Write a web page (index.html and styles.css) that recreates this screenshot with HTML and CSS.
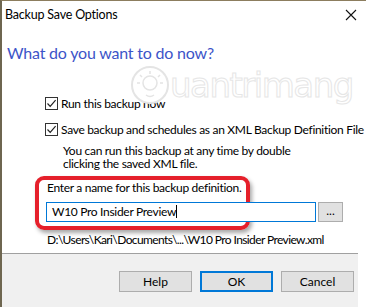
FILE: index.html
```html
<!DOCTYPE html>
<html lang="en">
<head>
    <meta charset="UTF-8">
    <meta name="viewport" content="width=device-width, initial-scale=1.0">
    <title>Backup Save Options</title>
    <link rel="stylesheet" href="styles.css">
</head>
<body>
<div class="window">
    <div class="titlebar">
        <span class="title">Backup Save Options</span>
        <svg class="close" width="12" height="12" viewBox="0 0 12 12">
            <path d="M1 1 L11 11 M11 1 L1 11" stroke="#111" stroke-width="1.1" fill="none"/>
        </svg>
    </div>

    <div class="content">
        <h1>What do you want to do now?</h1>

        <div class="check first">
            <span class="box">
                <svg width="11" height="11" viewBox="0 0 11 11"><path d="M1.5 5.5 L4.2 8.3 L9.6 2.2" stroke="#222" stroke-width="1.2" fill="none"/></svg>
            </span>
            <span>Run this backup now</span>
        </div>
        <div class="check">
            <span class="box">
                <svg width="11" height="11" viewBox="0 0 11 11"><path d="M1.5 5.5 L4.2 8.3 L9.6 2.2" stroke="#222" stroke-width="1.2" fill="none"/></svg>
            </span>
            <span>Save backup and schedules as an XML Backup Definition File</span>
        </div>
        <p class="note">You can run this backup at any time by double<br>clicking the saved XML file.</p>

        <div class="name-group">
            <div class="highlight"></div>
            <div class="prompt">Enter a name for this backup definition.</div>
            <div class="name-row">
                <div class="name-input">W10 Pro Insider Preview<span class="caret"></span></div>
                <button class="browse">...</button>
            </div>
        </div>
        <div class="path">D:\Users\Kari\Documents\...\W10 Pro Insider Preview.xml</div>

        <div class="watermark">
            <svg width="40" height="40" viewBox="0 0 40 40">
                <circle cx="20" cy="20" r="18" stroke="#e4e4e4" stroke-width="2" fill="none"/>
                <circle cx="20" cy="18" r="7" stroke="#e4e4e4" stroke-width="1.5" fill="none"/>
                <path d="M20 6 V9 M10 10 L12 12 M30 10 L28 12 M7 18 H10 M30 18 H33 M16 30 Q20 33 24 30" stroke="#e4e4e4" stroke-width="1.5" fill="none"/>
            </svg>
            <span>uantrimang</span>
        </div>
    </div>

    <div class="footer">
        <button class="btn">Help</button>
        <button class="btn default">OK</button>
        <button class="btn">Cancel</button>
    </div>
</div>
</body>
</html>
```

FILE: styles.css
```css
body {
    margin: 0;
    background-color: #ffffff;
    font-family: 'Lato', 'Noto Sans', sans-serif;
    font-size: 12px;
    color: #000;
}

.window {
    position: relative;
    width: 366px;
    height: 307px;
    box-sizing: border-box;
    border-top: 1px solid #8c7d5e;
    border-left: 2px solid #6e6650;
    background-color: #fff;
    overflow: hidden;
    white-space: nowrap;
    letter-spacing: -0.3px;
}

.titlebar {
    display: flex;
    justify-content: space-between;
    align-items: center;
    height: 26px;
    padding: 0 8px 0 3px;
}

.title {
    font-size: 12.5px;
    letter-spacing: -0.2px;
}

.close {
    margin-top: 2px;
    margin-right: 1px;
}

.content {
    position: relative;
    box-sizing: border-box;
    padding: 16px 0 0 5px;
    height: 226px;
}

h1 {
    margin: 0;
    font-size: 16px;
    font-weight: normal;
    line-height: 20px;
    color: #3c54c8;
    letter-spacing: -0.2px;
}

.check {
    display: flex;
    align-items: center;
    height: 16px;
    margin-left: 38px;
    margin-top: 10px;
}

.check.first {
    margin-top: 32px;
}

.box {
    display: flex;
    align-items: center;
    justify-content: center;
    width: 11px;
    height: 11px;
    border: 1px solid #333;
    margin-right: 3px;
    background-color: #fff;
}

.note {
    margin: 7px 0 0 56px;
    line-height: 13px;
}

.name-group {
    position: relative;
    margin: 11px 0 0 40px;
    width: 300px;
}

.highlight {
    position: absolute;
    left: -12px;
    top: -5px;
    width: 207px;
    height: 46px;
    border: 4px solid #e5202b;
    border-radius: 9px;
    box-shadow: 2px 3px 4px rgba(0, 0, 0, 0.35);
}

.prompt {
    line-height: 14px;
}

.name-row {
    display: flex;
    align-items: center;
    margin: 7px 0 0 -1px;
}

.name-input {
    position: relative;
    width: 263px;
    height: 18px;
    border: 1px solid #0078d7;
    line-height: 18px;
    padding-left: 5px;
    background-color: #fff;
}

.caret {
    display: inline-block;
    width: 1px;
    height: 13px;
    background-color: #000;
    vertical-align: -2px;
}

.browse {
    width: 25px;
    height: 20px;
    margin-left: 2px;
    border: 1px solid #adadad;
    background-color: #e1e1e1;
    font-family: inherit;
    font-size: 12px;
    padding: 0 0 4px 0;
}

.path {
    margin: 11px 0 0 40px;
    line-height: 14px;
    letter-spacing: -0.6px;
}

.watermark {
    position: absolute;
    left: 128px;
    top: 38px;
    display: flex;
    align-items: center;
    pointer-events: none;
}

.watermark span {
    font-family: 'DejaVu Sans', sans-serif;
    font-size: 34px;
    color: transparent;
    -webkit-text-stroke: 1px #e6e6e6;
    letter-spacing: -1.5px;
}

.footer {
    display: flex;
    justify-content: flex-end;
    gap: 8px;
    height: 54px;
    padding: 17px 4px 0 0;
    box-sizing: border-box;
    margin-right: 8px;
    border-top: 1px solid #a0a0a0;
    background-color: #f0f0f0;
}

.btn {
    width: 73px;
    height: 21px;
    border: 1px solid #adadad;
    background-color: #e1e1e1;
    font-family: inherit;
    font-size: 12px;
    letter-spacing: 0;
    padding: 0;
}

.btn.default {
    border: 2px solid #0078d7;
}
```
